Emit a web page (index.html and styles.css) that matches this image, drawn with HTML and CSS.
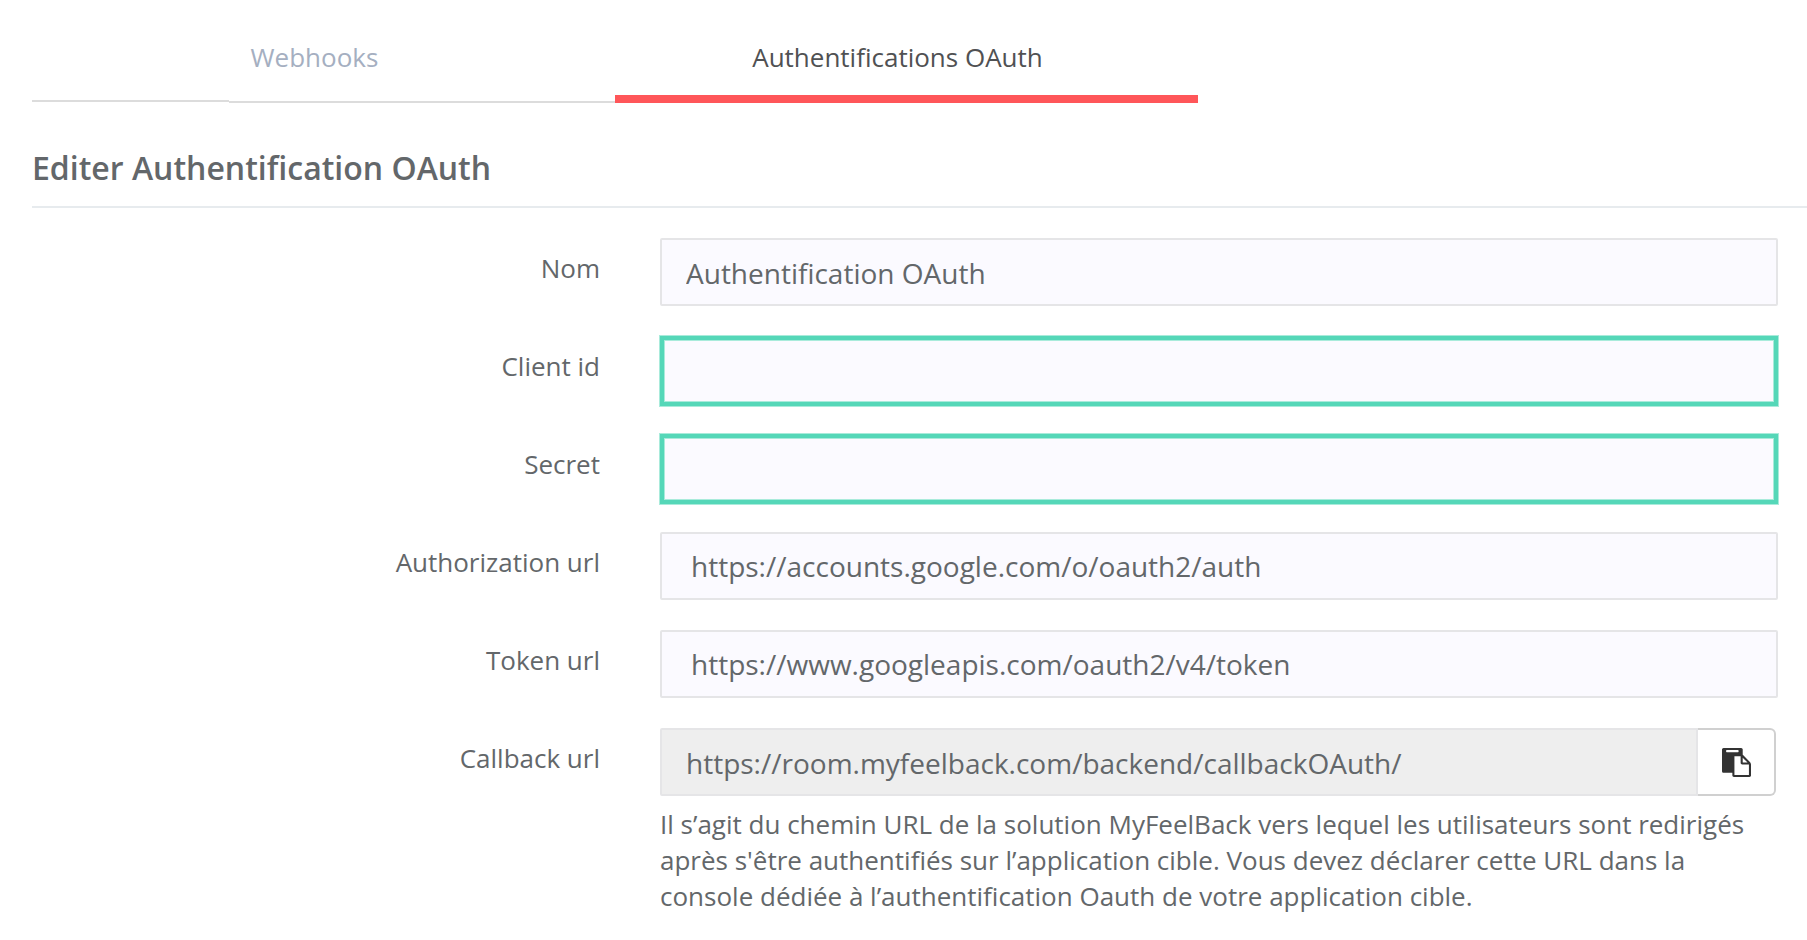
FILE: index.html
```
<!DOCTYPE html>
<html lang="fr">
<head>
    <meta charset="UTF-8">
    <meta name="viewport" content="width=device-width, initial-scale=1.0">
    <title>Editer Authentification OAuth</title>
    <link rel="stylesheet" href="styles.css">
</head>
<body>
    <nav class="tabs">
        <a class="tab" href="#webhooks">Webhooks</a>
        <a class="tab tab-active" href="#oauth">Authentifications OAuth</a>
    </nav>
    <main>
        <h1>Editer Authentification OAuth</h1>
        <form class="oauth-form">
            <div class="form-row">
                <label for="nom">Nom</label>
                <input class="field" type="text" id="nom" value="Authentification OAuth">
            </div>
            <div class="form-row">
                <label for="client-id">Client id</label>
                <input class="field field-highlight" type="text" id="client-id">
            </div>
            <div class="form-row">
                <label for="secret">Secret</label>
                <input class="field field-highlight" type="text" id="secret">
            </div>
            <div class="form-row">
                <label for="authorization-url">Authorization url</label>
                <input class="field field-url" type="text" id="authorization-url" value="https://accounts.google.com/o/oauth2/auth">
            </div>
            <div class="form-row">
                <label for="token-url">Token url</label>
                <input class="field field-url" type="text" id="token-url" value="https://www.googleapis.com/oauth2/v4/token">
            </div>
            <div class="form-row">
                <label for="callback-url">Callback url</label>
                <div class="callback">
                    <div class="input-group">
                        <input class="field" type="text" id="callback-url" value="https://room.myfeelback.com/backend/callbackOAuth/" readonly>
                        <button class="copy-btn" type="button" aria-label="Copier">
                            <svg viewBox="0 0 1792 1792" width="29" height="29" fill="currentColor"><path d="M768 1664h896v-640h-416q-40 0-68-28t-28-68v-416h-384v1152zm256-1440v-64q0-13-9.500-22.500t-22.500-9.500h-704q-13 0-22.500 9.500t-9.500 22.500v64q0 13 9.500 22.500t22.500 9.500h704q13 0 22.500-9.500t9.500-22.500zm256 672h299l-299-299v299zm512 128v672q0 40-28 68t-68 28h-960q-40 0-68-28t-28-68v-160h-544q-40 0-68-28t-28-68v-1344q0-40 28-68t68-28h1088q40 0 68 28t28 68v328q21 13 36 28l408 408q28 28 48 76t20 88z"/></svg>
                        </button>
                    </div>
                    <p class="help">Il s’agit du chemin URL de la solution MyFeelBack vers lequel les utilisateurs sont redirigés après s'être authentifiés sur l’application cible. Vous devez déclarer cette URL dans la console dédiée à l’authentification Oauth de votre application cible.</p>
                </div>
            </div>
        </form>
    </main>
</body>
</html>
```

FILE: styles.css
```
* {
    box-sizing: border-box;
}
body {
    margin: 0;
    padding: 32px 0 32px 32px;
    background-color: #fff;
    color: #63676a;
    font-family: "Open Sans", sans-serif;
    font-size: 26px;
    line-height: 36px;
}
.tabs {
    display: flex;
    max-width: 1166px;
}
.tab {
    flex: 1;
    height: 71px;
    padding: 7px 18px 0 0;
    color: #a5afc1;
    text-align: center;
    text-decoration: none;
    /* underline in two pieces, the first one sits 1px higher */
    background:
        linear-gradient(#dcdcdc, #dcdcdc) 0 68px / 197px 2px no-repeat,
        linear-gradient(#dcdcdc, #dcdcdc) 197px 69px / 100% 2px no-repeat;
}
.tab-active {
    color: #505153;
    background: none;
    border-bottom: 8px solid #ff5659;
}
h1 {
    margin: 43px 0 30px;
    padding-bottom: 16px;
    border-bottom: 2px solid #e7ebee;
    font-size: 32px;
    font-weight: 600;
    line-height: 44px;
}
.oauth-form {
    display: flex;
    flex-direction: column;
    gap: 30px;
    padding-right: 29px;
}
.form-row {
    display: grid;
    grid-template-columns: 568px minmax(0, 1fr);
    column-gap: 60px;
    align-items: start;
}
label {
    padding-top: 12px;
    text-align: right;
}
.field {
    width: 100%;
    height: 68px;
    padding: 2px 24px 0;
    border: 2px solid #e5e5e7;
    border-radius: 2px;
    background-color: #fbfaff;
    color: #63676a;
    font: inherit;
    font-size: 28px;
    outline: none;
}
.field-highlight {
    height: 70px;
    margin-bottom: -2px;
    border: 4px solid #55d7b8;
    border-radius: 0;
    box-shadow: 0 0 0 1px #a9ebdb, inset 0 0 0 1px #a9ebdb;
}
.field-url {
    padding: 0 29px;
}
.input-group {
    display: flex;
    padding-right: 2px;
}
.input-group .field {
    flex: 1;
    min-width: 0;
    border-radius: 2px 0 0 2px;
    background-color: #eee;
}
.copy-btn {
    display: flex;
    align-items: center;
    justify-content: center;
    width: 78px;
    padding: 0;
    border: 2px solid #d0d0d0;
    border-left: none;
    border-radius: 0 6px 6px 0;
    background-color: #fff;
    color: #333;
    cursor: pointer;
}
.help {
    margin: 10px 0 0;
}
```
